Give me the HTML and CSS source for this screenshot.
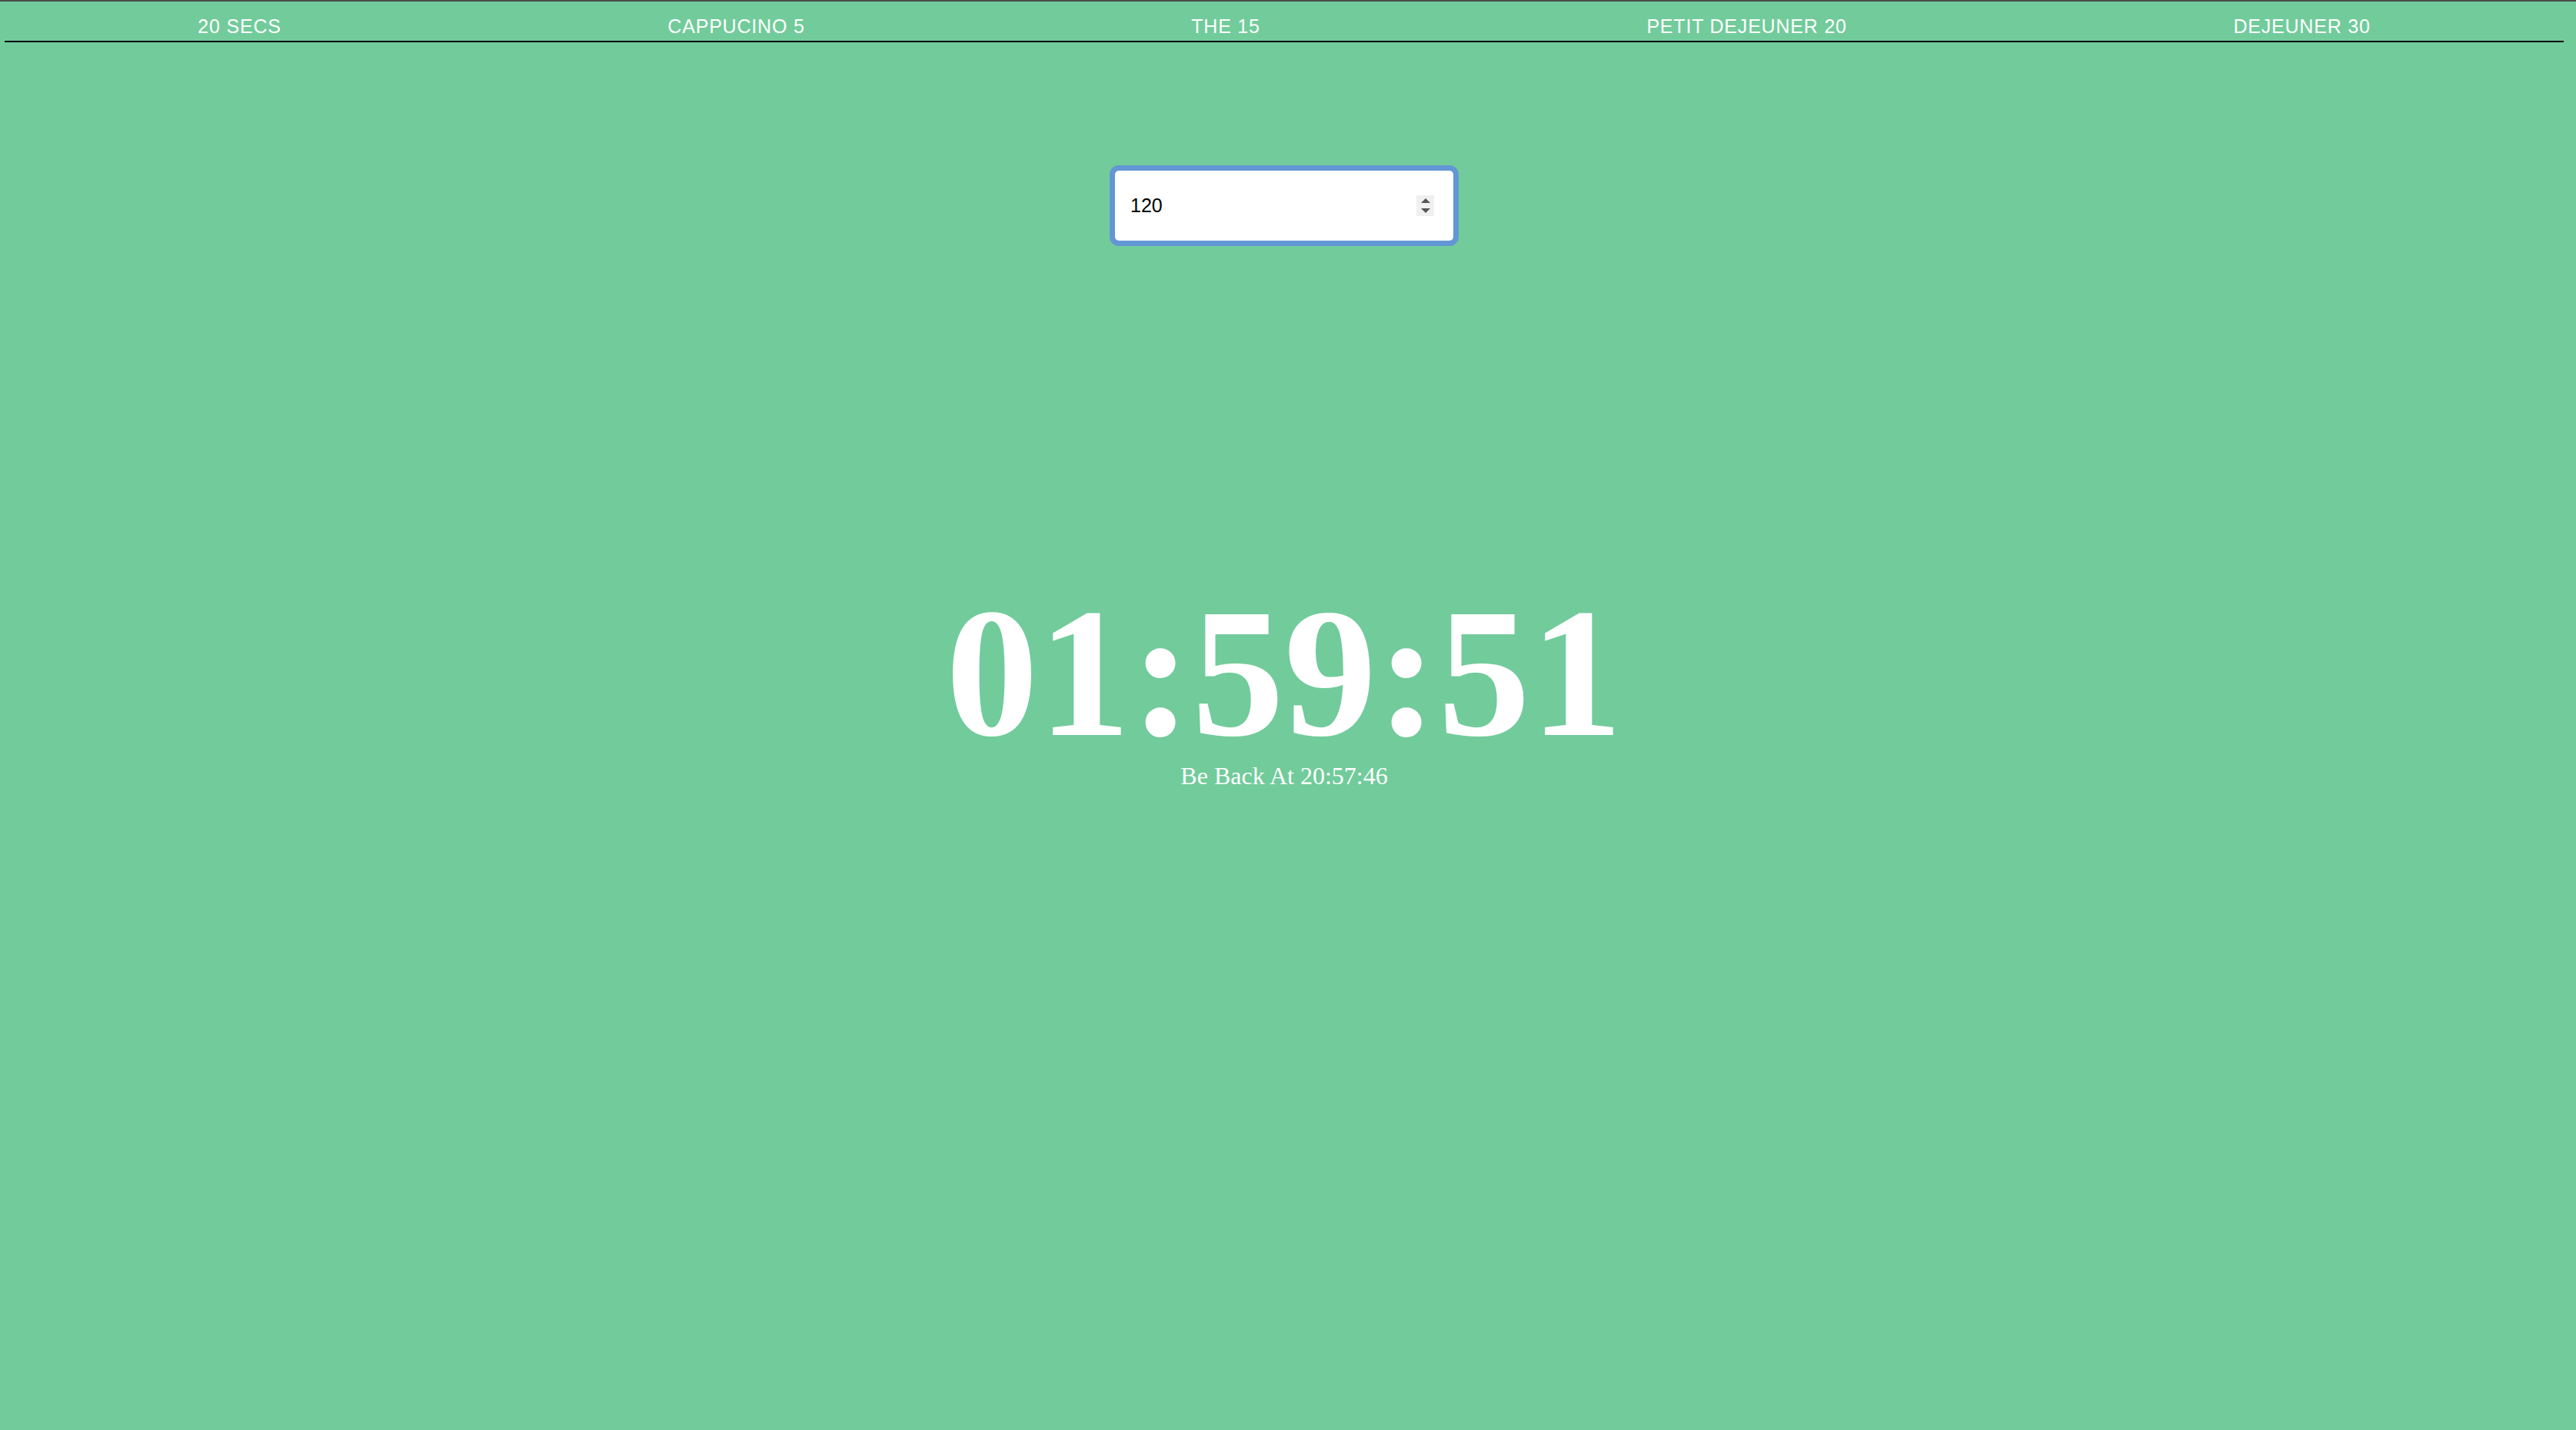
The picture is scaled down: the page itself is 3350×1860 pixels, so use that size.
FILE: index.html
```html
<!DOCTYPE html>
<html lang="fr">
<head>
<meta charset="utf-8">
<title>Be Back</title>
<link rel="stylesheet" href="styles.css">
</head>
<body>
<div class="page">
  <nav class="nav">
    <a class="nav-item">20 SECS</a>
    <a class="nav-item">CAPPUCINO 5</a>
    <a class="nav-item">THE 15</a>
    <a class="nav-item">PETIT DEJEUNER 20</a>
    <a class="nav-item">DEJEUNER 30</a>
  </nav>
  <main class="main">
    <div class="field">
      <input class="field-input" type="text" value="120">
      <span class="spinner"><span class="arrow-up"></span><span class="arrow-down"></span></span>
    </div>
    <div class="timer">01:59:51</div>
    <div class="back">Be Back At 20:57:46</div>
  </main>
</div>
</body>
</html>
```
FILE: styles.css
```css
html, body {
  margin: 0;
  padding: 0;
}
body {
  background: #72cb9b;
  border-top: 2px solid #4a4a4a;
  min-height: 1858px;
}
.page {
  margin: 0 16px 0 6px;
}
.nav {
  display: flex;
  padding: 18px 0 5px;
  border-bottom: 2px solid #000;
}
.nav-item {
  flex: 1 1 auto;
  text-align: center;
  font-family: "Liberation Sans", Arial, sans-serif;
  font-size: 25px;
  line-height: 28px;
  letter-spacing: 0.8px;
  color: #fff;
  white-space: nowrap;
}
.main {
  display: flex;
  flex-direction: column;
  align-items: center;
}
.field {
  margin-top: 160px;
  box-sizing: border-box;
  width: 454px;
  height: 105px;
  border: 7px solid #6396d4;
  border-radius: 12px;
  background: #fff;
  display: flex;
  align-items: center;
  padding: 0 25px 0 20px;
}
.field-input {
  flex: 1;
  min-width: 0;
  border: none;
  outline: none;
  background: transparent;
  padding: 0;
  font-family: "Liberation Sans", Arial, sans-serif;
  font-size: 25px;
  color: #000;
}
.spinner {
  width: 23px;
  height: 27px;
  background: #f0f0f0;
  display: flex;
  flex-direction: column;
  align-items: center;
  justify-content: center;
  gap: 7px;
}
.arrow-up {
  width: 0;
  height: 0;
  border-left: 6.5px solid transparent;
  border-right: 6.5px solid transparent;
  border-bottom: 6px solid #555;
}
.arrow-down {
  width: 0;
  height: 0;
  border-left: 6.5px solid transparent;
  border-right: 6.5px solid transparent;
  border-top: 6px solid #555;
}
.timer {
  margin-top: 440px;
  font-family: "Liberation Serif", "Times New Roman", serif;
  font-weight: bold;
  font-size: 240px;
  line-height: 230px;
  color: #fff;
}
.back {
  padding-top: 3px;
  font-family: "Liberation Serif", "Times New Roman", serif;
  font-size: 32px;
  line-height: 32px;
  color: #fff;
}
```
